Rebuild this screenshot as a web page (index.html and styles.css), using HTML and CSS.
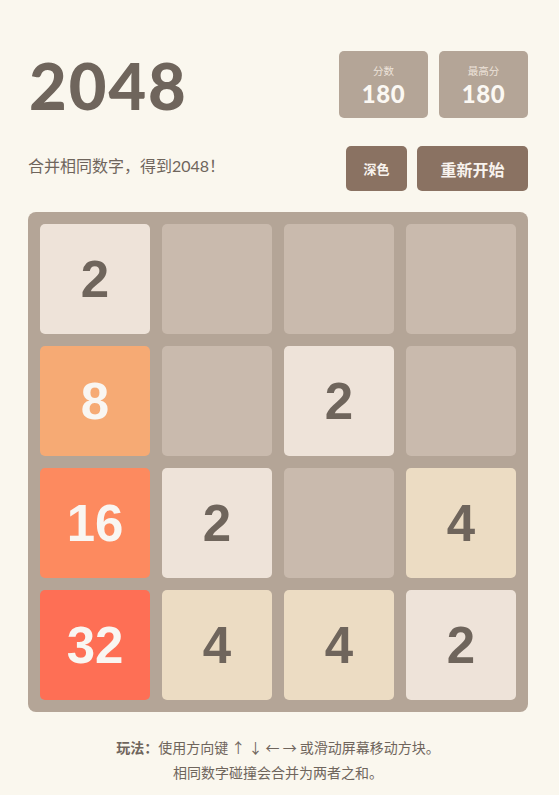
FILE: index.html
```html
<!DOCTYPE html>
<html lang="zh">
<head>
<meta charset="utf-8">
<title>2048</title>
<link rel="stylesheet" href="styles.css">
</head>
<body>
<div class="page">
  <header class="top">
    <h1 class="title">2048</h1>
    <div class="scores">
      <div class="score-box"><div class="score-label">分数</div><div class="score-value">180</div></div>
      <div class="score-box"><div class="score-label">最高分</div><div class="score-value">180</div></div>
    </div>
  </header>
  <div class="sub">
    <p class="intro">合并相同数字，得到2048！</p>
    <div class="buttons">
      <button class="btn btn-small">深色</button>
      <button class="btn btn-large">重新开始</button>
    </div>
  </div>
  <div class="board">
    <div class="tile t2">2</div>
    <div class="tile"></div>
    <div class="tile"></div>
    <div class="tile"></div>
    <div class="tile t8">8</div>
    <div class="tile"></div>
    <div class="tile t2">2</div>
    <div class="tile"></div>
    <div class="tile t16">16</div>
    <div class="tile t2">2</div>
    <div class="tile"></div>
    <div class="tile t4">4</div>
    <div class="tile t32">32</div>
    <div class="tile t4">4</div>
    <div class="tile t4">4</div>
    <div class="tile t2">2</div>
  </div>
  <footer class="help">
    <p><strong>玩法：</strong>使用方向键 ↑ ↓ ← → 或滑动屏幕移动方块。</p>
    <p>相同数字碰撞会合并为两者之和。</p>
  </footer>
</div>
</body>
</html>
```
FILE: styles.css
```css
html, body {
  margin: 0;
  padding: 0;
  background: #faf7ee;
}
body {
  font-family: "Lato", "Noto Sans CJK SC", sans-serif;
  color: #6f655c;
}
.page {
  width: 500px;
  margin-left: 28px;
  padding-top: 51px;
}
.top {
  display: flex;
  justify-content: space-between;
  align-items: flex-start;
  height: 67px;
}
.title {
  margin: 0;
  font-family: "Lato", sans-serif;
  font-weight: 900;
  font-size: 65px;
  line-height: 64px;
  margin-top: 2px;
  margin-left: 1px;
  letter-spacing: 2px;
  color: #6f655c;
}
.scores {
  display: flex;
  gap: 11px;
}
.score-box {
  width: 89px;
  height: 67px;
  background: #b4a597;
  border-radius: 5px;
  display: flex;
  flex-direction: column;
  align-items: center;
  justify-content: center;
  gap: 3px;
}
.score-label {
  font-family: "Noto Sans CJK SC", sans-serif;
  font-size: 10.5px;
  line-height: 16px;
  color: #ede3da;
}
.score-value {
  font-family: "Lato", sans-serif;
  font-weight: 900;
  font-size: 24px;
  line-height: 24px;
  letter-spacing: 0.5px;
  color: #fbf8f3;
}
.sub {
  display: flex;
  justify-content: space-between;
  align-items: center;
  margin-top: 28px;
  height: 45px;
}
.intro {
  margin: 0;
  font-family: "Lato", "Noto Sans CJK SC", sans-serif;
  font-size: 16px;
  color: #6f655c;
  margin-top: -8px;
}
.buttons {
  display: flex;
  gap: 10px;
}
.btn {
  height: 45px;
  border: none;
  border-radius: 5px;
  background: #8a7262;
  color: #f8f3ee;
  font-family: "Noto Sans CJK SC", sans-serif;
  font-weight: 700;
  padding: 0;
}
.btn-small {
  width: 61px;
  font-size: 13px;
}
.btn-large {
  width: 111px;
  font-size: 16px;
}
.board {
  margin-top: 21px;
  width: 500px;
  height: 500px;
  box-sizing: border-box;
  padding: 12px;
  background: #b4a597;
  border-radius: 8px;
  display: grid;
  grid-template-columns: repeat(4, 110px);
  grid-template-rows: repeat(4, 110px);
  gap: 12px;
}
.tile {
  background: #c9baad;
  border-radius: 5px;
  display: flex;
  align-items: center;
  justify-content: center;
  font-family: "Liberation Sans", Arial, sans-serif;
  font-weight: 700;
  font-size: 51px;
  color: #6f655c;
}
.t2 { background: #eee3d9; }
.t4 { background: #ecdcc3; }
.t8 { background: #f6aa74; color: #f9f6f2; }
.t16 { background: #fd8a5f; color: #f9f6f2; }
.t32 { background: #fe6f55; color: #f9f6f2; }
.help {
  margin-top: 23px;
  text-align: center;
  font-family: "Noto Sans CJK SC", sans-serif;
  font-size: 14px;
  line-height: 25px;
  color: #6f655c;
}
.help p {
  margin: 0;
}
.help strong {
  font-weight: 700;
}
```
